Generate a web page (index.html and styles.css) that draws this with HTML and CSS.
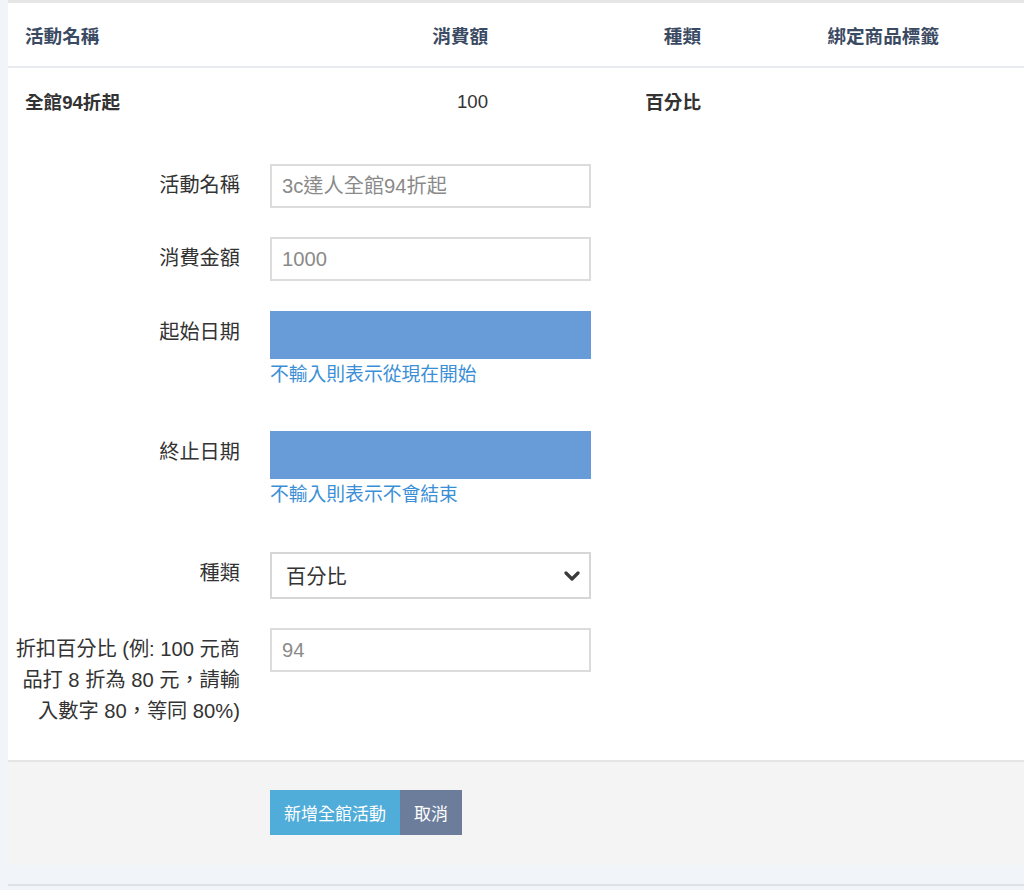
FILE: index.html
```html
<!DOCTYPE html>
<html lang="zh-Hant">
<head>
<meta charset="utf-8">
<title>全館活動</title>
<link rel="stylesheet" href="styles.css">
</head>
<body>
<div class="page">
  <div class="panel">
    <div class="table">
      <div class="row head">
        <div class="cell c1">活動名稱</div>
        <div class="cell c2">消費額</div>
        <div class="cell c3">種類</div>
        <div class="cell c4">綁定商品標籤</div>
        <div class="cell c5"></div>
      </div>
      <div class="row data">
        <div class="cell c1 strong">全館94折起</div>
        <div class="cell c2 num">100</div>
        <div class="cell c3 strong">百分比</div>
        <div class="cell c4"></div>
        <div class="cell c5"></div>
      </div>
    </div>

    <div class="form-body">
      <div class="form-group">
        <label class="form-label">活動名稱</label>
        <div class="control">
          <input class="text-input" type="text" placeholder="3c達人全館94折起">
        </div>
      </div>
      <div class="form-group wide">
        <label class="form-label">消費金額</label>
        <div class="control">
          <input class="text-input" type="text" placeholder="1000">
        </div>
      </div>
      <div class="form-group with-help">
        <label class="form-label">起始日期</label>
        <div class="control">
          <div class="date-box"></div>
          <div class="help">不輸入則表示從現在開始</div>
        </div>
      </div>
      <div class="form-group with-help second">
        <label class="form-label">終止日期</label>
        <div class="control">
          <div class="date-box"></div>
          <div class="help">不輸入則表示不會結束</div>
        </div>
      </div>
      <div class="form-group">
        <label class="form-label">種類</label>
        <div class="control">
          <div class="select-box">
            <span>百分比</span>
            <svg class="chev" width="16" height="10" viewBox="0 0 16 10"><polyline points="2,2 8,8 14,2" fill="none" stroke="#3a3a3a" stroke-width="3.2" stroke-linecap="round" stroke-linejoin="round"/></svg>
          </div>
        </div>
      </div>
      <div class="form-group last">
        <label class="form-label">折扣百分比 (例: 100 元商<br>品打 8 折為 80 元，請輸<br>入數字 80，等同 80%)</label>
        <div class="control">
          <input class="text-input" type="text" placeholder="94">
        </div>
      </div>
    </div>

    <div class="form-actions">
      <button class="btn btn-primary" type="button">新增全館活動</button><button class="btn btn-cancel" type="button">取消</button>
    </div>
  </div>
  <div class="below"></div>
</div>
</body>
</html>
```

FILE: styles.css
```css
* { box-sizing: border-box; }

html, body {
  margin: 0;
  padding: 0;
  background: #f1f4f9;
  font-family: "Liberation Sans", "Noto Sans CJK TC", "Noto Sans CJK SC", sans-serif;
  color: #333;
}

.page {
  padding-left: 8px;
  height: 890px;
  overflow: hidden;
}

.panel {
  background: #fff;
  border-top: 3px solid #e6e6e6;
}

/* table */
.row {
  display: grid;
  grid-template-columns: 292px 205px 213px 238px 1fr;
  align-items: center;
  font-size: 18.6px;
}

.row.head {
  height: 65px;
  border-bottom: 2px solid #e8ecf0;
  font-weight: bold;
  color: #3b4a63;
}

.row.data {
  height: 64px;
}

.cell {
  padding: 0 17px;
  white-space: nowrap;
}

.c1 { text-align: left; }
.c2, .c3, .c4 { text-align: right; }

.num {
  padding-top: 3px;
}

.strong {
  font-weight: bold;
  color: #333;
}

/* form */
.form-body {
  padding-top: 32px;
  padding-bottom: 33px;
}

.form-group {
  display: flex;
  align-items: flex-start;
  margin-bottom: 29px;
}

.form-group.wide {
  margin-bottom: 30px;
}

.form-group.with-help {
  margin-bottom: 42px;
}

.form-group.with-help.second {
  margin-bottom: 43px;
}

.form-group.last {
  margin-bottom: 0;
}

.form-label {
  width: 232px;
  flex: none;
  padding-top: 6px;
  text-align: right;
  font-size: 20.2px;
  line-height: 31px;
  color: #333;
}

.control {
  margin-left: 30px;
  width: 321px;
  flex: none;
}

.text-input {
  display: block;
  width: 321px;
  height: 44px;
  margin: 0;
  padding: 0 10px;
  border: 2px solid #dcdcdc;
  background: #fff;
  font-family: inherit;
  font-size: 20.2px;
  color: #333;
  outline: none;
  border-radius: 0;
}

.text-input::placeholder {
  color: #8a8a8a;
  opacity: 1;
}

.date-box {
  height: 48px;
  background: #689cd8;
}

.help {
  font-size: 18.8px;
  line-height: 30px;
  padding-top: 1px;
  height: 30px;
  color: #3b8fd6;
}

.select-box {
  height: 47px;
  border: 2px solid #d6d6d6;
  display: flex;
  align-items: center;
  justify-content: space-between;
  padding: 0 9px 0 14px;
  font-size: 20.2px;
  color: #333;
}

.chev {
  display: block;
}

/* footer */
.form-actions {
  border-top: 2px solid #e5e5e5;
  background: #f4f4f4;
  padding: 28px 0 30px 262px;
  display: flex;
}

.btn {
  height: 45px;
  margin: 0;
  border: none;
  border-radius: 0;
  font-family: inherit;
  font-size: 17px;
  color: #fff;
  cursor: pointer;
}

.btn-primary {
  width: 130px;
  background: #50acd8;
}

.btn-cancel {
  width: 62px;
  background: #6b7d9b;
}

.below {
  margin-top: 19px;
  border-top: 2px solid #dde2e8;
  height: 20px;
}
```
